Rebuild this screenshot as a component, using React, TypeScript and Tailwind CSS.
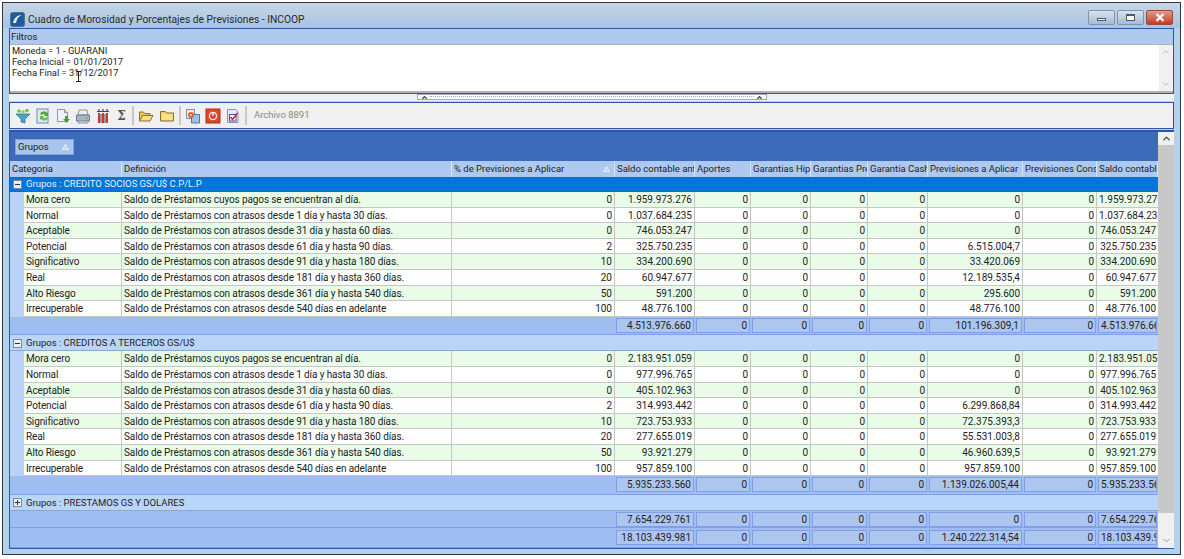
import { ChevronUp, ChevronDown } from "lucide-react";

const font = "font-['Roboto',_sans-serif]";

const widths = [
  "w-[98px]",
  "w-[330px]",
  "w-[163px]",
  "w-[80px]",
  "w-[56px]",
  "w-[60px]",
  "w-[57px]",
  "w-[60px]",
  "w-[95px]",
  "w-[74px]",
  "w-[61px]",
];

const headers = [
  "Categoria",
  "Definición",
  "% de Previsiones a Aplicar",
  "Saldo contable ant",
  "Aportes",
  "Garantias Hip",
  "Garantias Prend",
  "Garantia Cash",
  "Previsiones a Aplicar",
  "Previsiones Cons",
  "Saldo contable",
];

const defs = [
  ["Mora cero", "Saldo de Préstamos cuyos pagos se encuentran al día."],
  ["Normal", "Saldo de Préstamos con atrasos desde 1 día y hasta 30 días."],
  ["Aceptable", "Saldo de Préstamos con atrasos desde 31 día y hasta 60 días."],
  ["Potencial", "Saldo de Préstamos con atrasos desde 61 día y hasta 90 días."],
  ["Significativo", "Saldo de Préstamos con atrasos desde 91 día y hasta 180 días."],
  ["Real", "Saldo de Préstamos con atrasos desde 181 día y hasta 360 días."],
  ["Alto Riesgo", "Saldo de Préstamos con atrasos desde 361 día y hasta 540 días."],
  ["Irrecuperable", "Saldo de Préstamos con atrasos desde 540 días en adelante"],
];

const pct = ["0", "0", "0", "2", "10", "20", "50", "100"];

const group1 = [
  ["1.959.973.276", "0", "1.959.973.276"],
  ["1.037.684.235", "0", "1.037.684.235"],
  ["746.053.247", "0", "746.053.247"],
  ["325.750.235", "6.515.004,7", "325.750.235"],
  ["334.200.690", "33.420.069", "334.200.690"],
  ["60.947.677", "12.189.535,4", "60.947.677"],
  ["591.200", "295.600", "591.200"],
  ["48.776.100", "48.776.100", "48.776.100"],
];

const group2 = [
  ["2.183.951.059", "0", "2.183.951.059"],
  ["977.996.765", "0", "977.996.765"],
  ["405.102.963", "0", "405.102.963"],
  ["314.993.442", "6.299.868,84", "314.993.442"],
  ["723.753.933", "72.375.393,3", "723.753.933"],
  ["277.655.019", "55.531.003,8", "277.655.019"],
  ["93.921.279", "46.960.639,5", "93.921.279"],
  ["957.859.100", "957.859.100", "957.859.100"],
];

function Row({ index, values }: { index: number; values: string[] }) {
  const cells = [
    defs[index][0],
    defs[index][1],
    pct[index],
    values[0],
    "0",
    "0",
    "0",
    "0",
    values[1],
    "0",
    values[2],
  ];
  return (
    <div className="flex h-[15.6px] text-[10px]">
      <div className="w-[14px] shrink-0 bg-[#b9d3f8]" />
      {cells.map((c, i) => (
        <div
          key={i}
          className={`${widths[i]} shrink-0 overflow-hidden whitespace-nowrap border-r border-b border-[#c4c8c4] px-[2px] pt-[1px] leading-[14px] ${
            i < 2 ? "text-left tracking-[-0.11px]" : "text-right"
          } ${index % 2 === 0 ? "bg-[#e8fce8]" : "bg-white"} ${i === 10 ? "border-r-0" : ""}`}
        >
          {c}
        </div>
      ))}
    </div>
  );
}

function Summary({ values, h }: { values: string[]; h: string }) {
  const cells = [values[0], "0", "0", "0", "0", values[1], "0", values[2]];
  return (
    <div className={`flex ${h} items-center border-b border-[#7f9fe6] bg-[#a0bdf2] text-[10px]`}>
      <div className="w-[605px] shrink-0" />
      {cells.map((c, i) => (
        <div key={i} className={`${widths[i + 3]} shrink-0 px-[1px]`}>
          <div className="h-[15px] overflow-hidden whitespace-nowrap border border-[#7f9fe6] bg-[#adc6ef] px-[2px] text-right leading-[13px]">
            {c}
          </div>
        </div>
      ))}
    </div>
  );
}

function Expander({ open }: { open: boolean }) {
  return (
    <span className="mx-[3px] flex h-[9px] w-[9px] shrink-0 items-center justify-center border border-[#808890] bg-[#e8eef6]">
      <svg width="7" height="7" viewBox="0 0 7 7">
        <path d="M1 3.5h5" stroke="#333" strokeWidth="1" />
        {!open && <path d="M3.5 1v5" stroke="#333" strokeWidth="1" />}
      </svg>
    </span>
  );
}

function GroupRow({ label, selected, open, h }: { label: string; selected?: boolean; open: boolean; h: string }) {
  return (
    <div
      className={`flex ${h} items-center border-b ${
        selected
          ? "border-dotted border-t border-[#3a5a80] bg-[#0275d8] text-[#e8f2ff]"
          : "border-[#8fa8c8] bg-[#b9d5fa] pt-[1px]"
      }`}
    >
      <Expander open={open} />
      <span className="ml-[1px]">{label}</span>
    </div>
  );
}

function Sep() {
  return <div className="mx-[2px] h-[19px] w-[2px] shrink-0 bg-[#c8c8c8]" />;
}

function ToolIcon({ children, w = "w-[20px]" }: { children: React.ReactNode; w?: string }) {
  return (
    <span className={`flex ${w} shrink-0 items-center justify-center`}>
      <svg width="16" height="16" viewBox="0 0 16 16">
        {children}
      </svg>
    </span>
  );
}

function Toolbar() {
  return (
    <div className="mt-[1px] flex h-[27px] items-center border border-[#2f55a8] bg-[#f0f0f0] pl-[3px]">
      <ToolIcon>
        <path d="M1 6h14l-5 5v4l-4-1v-3z" fill="#4aa3c8" stroke="#2a6f95" strokeWidth=".7" />
        <circle cx="4" cy="3" r="1.8" fill="#6cc24a" />
        <circle cx="8" cy="4" r="1.8" fill="#8bd05e" />
        <circle cx="12" cy="2.6" r="1.8" fill="#6cc24a" />
      </ToolIcon>
      <ToolIcon>
        <rect x="2" y="1" width="11" height="14" fill="#dfe8f4" stroke="#6f8db5" />
        <path d="M5 6a4 4 0 0 1 7-1l1-1v4h-4l1.3-1.3A2.4 2.4 0 0 0 6.5 7z" fill="#4aa82e" />
        <path d="M13 10a4 4 0 0 1-7 1l-1 1V8h4l-1.3 1.3A2.4 2.4 0 0 0 11.5 9z" fill="#6cc23a" />
      </ToolIcon>
      <ToolIcon>
        <path d="M2.5 1.5h7l3 3v9h-10z" fill="#eef2f6" stroke="#8b98a8" />
        <path d="M9.5 1.5v3h3" fill="#cfd8e2" stroke="#8b98a8" />
        <path d="M10 8h3v3h2l-3.5 4L8 11h2z" fill="#4f9a3a" />
      </ToolIcon>
      <ToolIcon>
        <path d="M4 2h8l1 5H3z" fill="#e8edf2" stroke="#8c97a4" />
        <path d="M1.5 7h13v6h-13z" fill="#a9b5c2" stroke="#6e7a88" />
        <path d="M3 13h10v2H3z" fill="#d8dfe6" stroke="#8c97a4" />
        <circle cx="12" cy="10" r="1" fill="#4fc14f" />
      </ToolIcon>
      <ToolIcon>
        <path d="M2 3.5h12M4 1v2.5M8 1v2.5M12 1v2.5" stroke="#3a4a5a" strokeWidth="1.2" />
        <path d="M4 5v10M8 5v10M12 5v10" stroke="#c63a2a" strokeWidth="2" />
        <path d="M6 6v9M10 6v9" stroke="#3a4a5a" strokeWidth="1" />
      </ToolIcon>
      <span className="flex w-[17px] shrink-0 justify-center font-['DejaVu_Serif',_serif] text-[12px] font-bold leading-none text-[#555]">
        Σ
      </span>
      <Sep />
      <ToolIcon>
        <path d="M1.5 13V4h4l1.5 1.5h5V8" fill="#e8c860" stroke="#8a7030" />
        <path d="M1.5 13l3-5.5h10.5l-3 5.5z" fill="#f6dc84" stroke="#8a7030" />
      </ToolIcon>
      <ToolIcon w="w-[21px]">
        <path d="M1.5 13V3.5h5l1.5 1.5h6.5V13z" fill="#f0cf6a" stroke="#8a7030" />
        <path d="M2.5 6h11v6h-11z" fill="#f8e08e" />
      </ToolIcon>
      <Sep />
      <ToolIcon>
        <path d="M1.5 1.5h8v9h-8z" fill="#e4ebf5" stroke="#6f8db5" />
        <path d="M6.5 6.5h8v8.5h-8z" fill="#9cc0ea" stroke="#4f78b0" />
        <circle cx="6" cy="7" r="3" fill="#e8641e" />
        <circle cx="6" cy="7" r="1.1" fill="#f7d7b8" />
      </ToolIcon>
      <ToolIcon>
        <rect x="1" y="1" width="14" height="14" fill="#e0452a" stroke="#b53018" />
        <circle cx="8" cy="8" r="3.6" fill="none" stroke="#fff" strokeWidth="1.3" />
        <path d="M8 4v4" stroke="#fff" strokeWidth="1.3" />
      </ToolIcon>
      <ToolIcon>
        <path d="M2.5 1.5h8l2.5 2.5v10.5H2.5z" fill="#e4ebf7" stroke="#7f93b8" />
        <rect x="4.5" y="6.5" width="6.5" height="6.5" fill="#fff" stroke="#3c54a8" />
        <path d="M5.5 9l2 2.5L12.5 5" fill="none" stroke="#d8281e" strokeWidth="1.6" />
      </ToolIcon>
      <Sep />
      <span className="ml-[5px] text-[#8a8a8a]">Archivo 8891</span>
    </div>
  );
}

function Filters() {
  return (
    <div className="relative border-x border-t border-[#2f55a8]">
      <div className="flex h-[15px] items-center bg-[#adc9ee] pl-[1px] pt-[1px]">Filtros</div>
      <div className="flex h-[49px] border-t border-b-2 border-[#b0b4b8] bg-white">
        <div className="flex-1 pl-[2px] text-[9.3px] leading-[11px]">
          <div>Moneda = 1 - GUARANI</div>
          <div>Fecha Inicial = 01/01/2017</div>
          <div>Fecha Final = 31/12/2017</div>
        </div>
        <div className="flex w-[14px] flex-col items-center justify-between bg-[#f0f0f0] py-[2px] text-[#b0b0b0]">
          <ChevronUp size={10} />
          <ChevronDown size={10} />
        </div>
      </div>
      <svg className="absolute left-[65px] top-[42px]" width="7" height="11" viewBox="0 0 7 11">
        <path d="M1 .5h5M1 10.5h5M3.5 .5v10" stroke="#222" fill="none" />
      </svg>
      <div className="h-[1px] bg-[#2f55a8]" />
    </div>
  );
}

function Splitter() {
  return (
    <div className="flex h-[7px] items-start justify-center bg-[#eef2f8]">
      <div className="flex h-[6px] w-[350px] items-center border border-[#a0a8b0] bg-white px-[3px]">
        <ChevronUp size={7} strokeWidth={4} className="shrink-0 text-[#222]" />
        <div className="mx-[2px] h-[2px] flex-1 border-t border-dotted border-[#8fb4d8]" />
        <ChevronUp size={7} strokeWidth={4} className="shrink-0 text-[#222]" />
      </div>
    </div>
  );
}

function Grid() {
  return (
    <div className="mt-[1px] flex h-[419px] border-x border-b border-t-2 border-[#2f55a8] bg-[#3d6ab8]">
      <div className="flex w-[1148px] shrink-0 flex-col">
        <div className="flex h-[29px] shrink-0 items-center pl-[5px] pt-[1px]">
          <div className="flex h-[16px] w-[59px] items-center justify-between border border-[#7f9fe6] bg-[#a9c5ec] pl-[2px] pr-[4px]">
            Grupos
            <svg width="7" height="6" viewBox="0 0 7 6">
              <path d="M3.5 .5L6.5 5.5H.5z" fill="#c5d8f2" stroke="#eaf1fb" />
            </svg>
          </div>
        </div>
        <div className="flex h-[16px] shrink-0 items-center bg-[#aec9ef]">
          {headers.map((h, i) => (
            <div
              key={i}
              className={`${i === 0 ? "w-[112px]" : widths[i]} relative flex h-full shrink-0 items-center overflow-hidden whitespace-nowrap border-r border-[#d6e4f8] pl-[2px] pt-[1px]`}
            >
              {h}
              {i === 2 && (
                <svg className="absolute right-[4px] top-[5px]" width="7" height="6" viewBox="0 0 7 6">
                  <path d="M3.5 .5L6.5 5.5H.5z" fill="#c5d8f2" stroke="#e4edf9" />
                </svg>
              )}
            </div>
          ))}
        </div>
        <GroupRow label="Grupos : CREDITO SOCIOS GS/U$ C.P/L.P" selected open h="h-[15px]" />
        {group1.map((v, i) => (
          <Row key={i} index={i} values={v} />
        ))}
        <Summary values={["4.513.976.660", "101.196.309,1", "4.513.976.660"]} h="h-[19px]" />
        <GroupRow label="Grupos : CREDITOS A TERCEROS GS/U$" open h="h-[16px]" />
        {group2.map((v, i) => (
          <Row key={i} index={i} values={v} />
        ))}
        <Summary values={["5.935.233.560", "1.139.026.005,44", "5.935.233.560"]} h="h-[19px]" />
        <GroupRow label="Grupos : PRESTAMOS GS Y DOLARES" open={false} h="h-[16px]" />
        <Summary values={["7.654.229.761", "0", "7.654.229.761"]} h="h-[18px]" />
        <Summary values={["18.103.439.981", "1.240.222.314,54", "18.103.439.981"]} h="h-[20px]" />
      </div>
      <div className="flex w-[16px] shrink-0 flex-col bg-[#f0f0f0] text-[#505050]">
        <div className="flex h-[13px] items-center justify-center">
          <ChevronUp size={11} strokeWidth={3} />
        </div>
        <div className="h-[368px] bg-[#c8c8c8]" />
        <div className="flex-1" />
        <div className="flex h-[15px] items-center justify-center text-[#909090]">
          <ChevronDown size={11} strokeWidth={2} />
        </div>
      </div>
    </div>
  );
}

export default function App() {
  return (
    <div className={`h-[559px] w-[1184px] overflow-hidden bg-white pl-[2px] pr-[3px] pt-[2px] text-[9.5px] text-[#222] ${font}`}>
      <div className="h-[553px] border border-[#303840] bg-[#b4d2ec] px-[6px]">
        <div className="-mx-[6px] flex h-[25px] items-end bg-gradient-to-b from-[#c6d6e6] to-[#a6c4e4] px-[7px] pb-[1px]">
          <svg width="15" height="15" viewBox="0 0 15 15" className="mr-[3px] shrink-0">
            <rect x=".5" y=".5" width="14" height="14" rx="2" fill="#1e5c9c" stroke="#54708c" />
            <path d="M3 11c1-5 4-8 9-8-3 1-5 3-6 8z" fill="#eaf3fb" />
          </svg>
          <span className="text-[10.25px] leading-[15px] text-[#2a2a2a]">Cuadro de Morosidad y Porcentajes de Previsiones - INCOOP</span>
          <div className="ml-auto flex gap-[2px] pb-[2px]">
            <div className="flex h-[15px] w-[27px] items-center justify-center rounded-[2px] border border-[#7f95ab] bg-gradient-to-b from-[#d8e4f0] to-[#a4bbd2]">
              <div className="mt-[3px] h-[3px] w-[9px] border border-[#4a5a6a] bg-white" />
            </div>
            <div className="flex h-[15px] w-[27px] items-center justify-center rounded-[2px] border border-[#7f95ab] bg-gradient-to-b from-[#d8e4f0] to-[#a4bbd2]">
              <div className="h-[7px] w-[9px] border border-t-2 border-[#4a5a6a] bg-white" />
            </div>
            <div className="flex h-[15px] w-[27px] items-center justify-center rounded-[2px] border border-[#9a4a3a] bg-gradient-to-b from-[#e09a88] to-[#c03a20]">
              <svg width="10" height="9" viewBox="0 0 10 9">
                <path d="M1.5 1l7 7M8.5 1l-7 7" stroke="#fff" strokeWidth="2.2" />
              </svg>
            </div>
          </div>
        </div>
        <Filters />
        <Splitter />
        <Toolbar />
        <Grid />
      </div>
    </div>
  );
}
